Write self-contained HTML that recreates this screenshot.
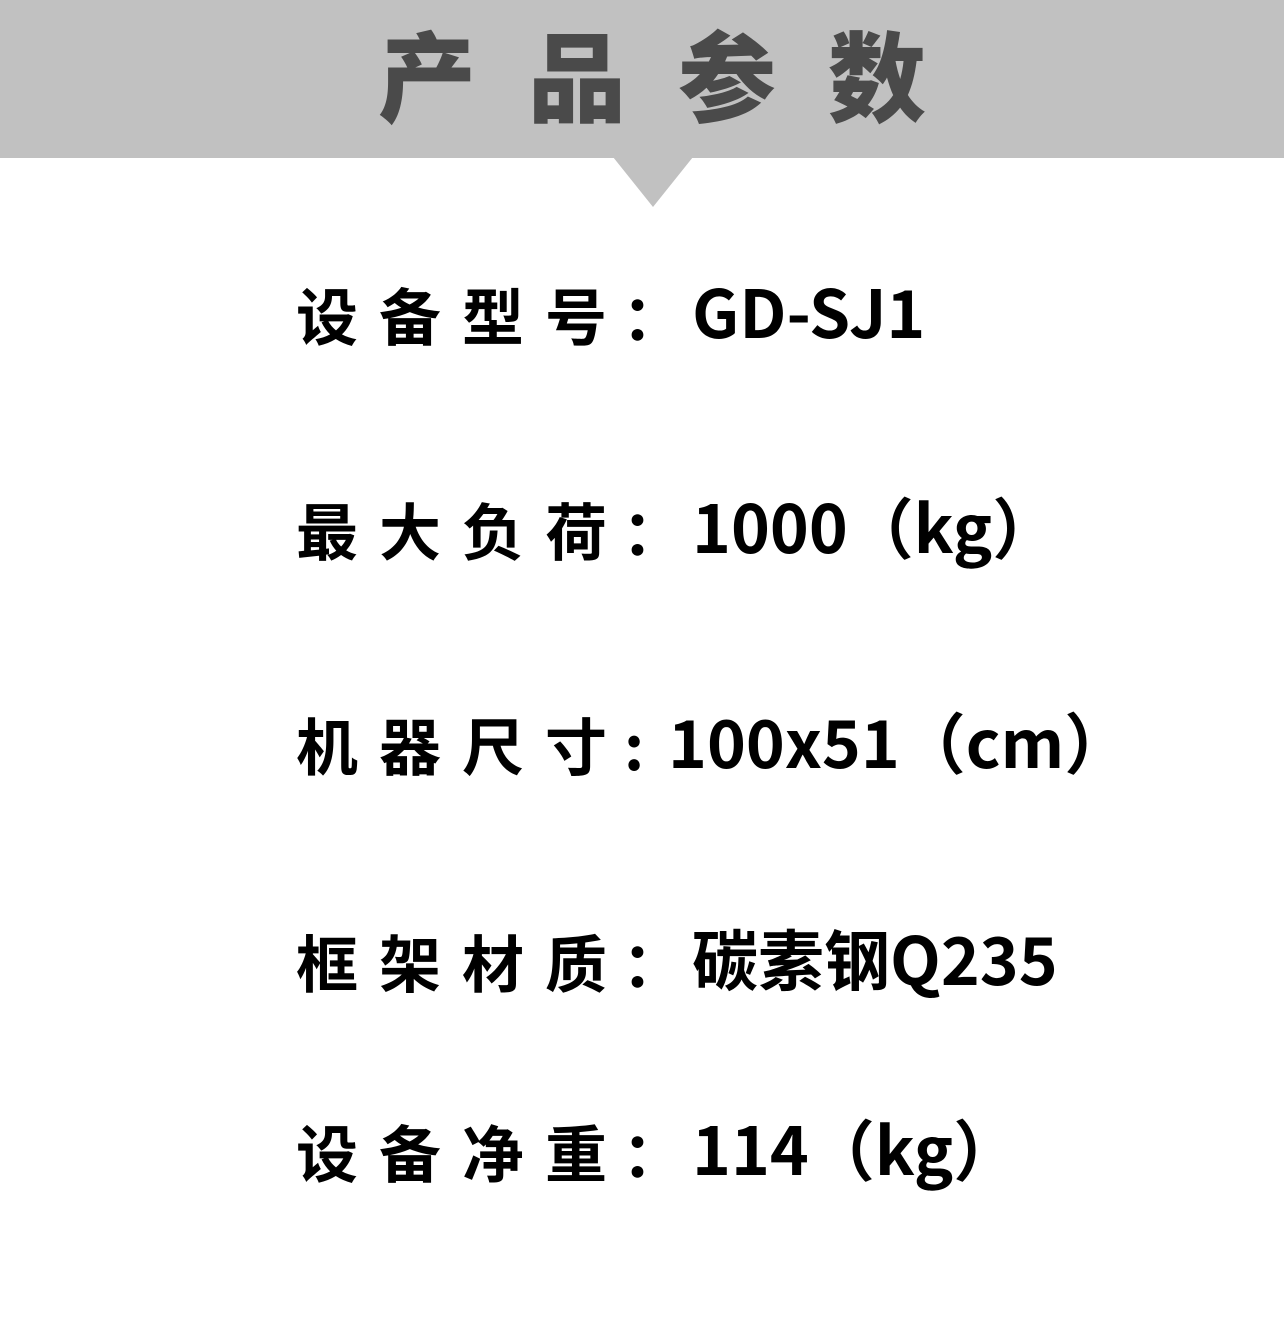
<!DOCTYPE html>
<html><head><meta charset="utf-8"><style>
html,body{margin:0;padding:0;background:#fff;width:1284px;height:1330px;overflow:hidden;position:relative}
.hdr{position:absolute;left:0;top:0;width:1284px;height:158px;background:#c1c1c1}
.tri{position:absolute;left:613px;top:157px;width:0;height:0;border-left:40px solid transparent;border-right:40px solid transparent;border-top:50px solid #c1c1c1}
.t{position:absolute;top:17px;font:900 98px/110px "Noto Sans CJK SC",sans-serif;color:#4a4a4a}
.r{position:absolute;font:bold 62px/80px "Noto Sans CJK SC","Liberation Sans",sans-serif;color:#000;white-space:nowrap}
.v{font-size:66px}
</style></head><body>
<div class="hdr"></div><div class="tri"></div>
<span class="t" style="left:378px">产</span>
<span class="t" style="left:528px">品</span>
<span class="t" style="left:678px">参</span>
<span class="t" style="left:828px">数</span>

<span class="r" style="left:296px;top:273px">设</span><span class="r" style="left:379px;top:273px">备</span><span class="r" style="left:462px;top:273px">型</span><span class="r" style="left:545px;top:273px">号</span><span class="r" style="left:622px;top:273px">：</span><span class="r v" style="left:692px;top:270px">GD-SJ1</span>

<span class="r" style="left:296px;top:488px">最</span><span class="r" style="left:379px;top:488px">大</span><span class="r" style="left:462px;top:488px">负</span><span class="r" style="left:545px;top:488px">荷</span><span class="r" style="left:622px;top:488px">：</span><span class="r v" style="left:692px;top:485px">1000（kg）</span>

<span class="r" style="left:296px;top:703px">机</span><span class="r" style="left:379px;top:703px">器</span><span class="r" style="left:462px;top:703px">尺</span><span class="r" style="left:545px;top:703px">寸</span><span class="r" style="left:624px;top:703px">:</span><span class="r v" style="left:668px;top:700px">100x51（cm）</span>

<span class="r" style="left:296px;top:920px">框</span><span class="r" style="left:379px;top:920px">架</span><span class="r" style="left:462px;top:920px">材</span><span class="r" style="left:545px;top:920px">质</span><span class="r" style="left:622px;top:920px">：</span><span class="r v" style="left:692px;top:917px">碳素钢Q235</span>

<span class="r" style="left:296px;top:1110px">设</span><span class="r" style="left:379px;top:1110px">备</span><span class="r" style="left:462px;top:1110px">净</span><span class="r" style="left:545px;top:1110px">重</span><span class="r" style="left:622px;top:1110px">：</span><span class="r v" style="left:692px;top:1107px">114（kg）</span>
</body></html>
